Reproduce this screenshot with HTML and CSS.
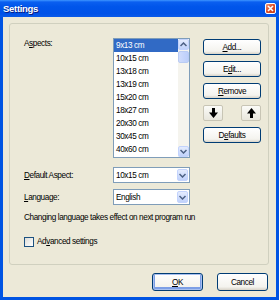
FILE: index.html
```html
<!DOCTYPE html>
<html lang="en">
<head>
    <meta charset="UTF-8">
    <title>Settings</title>
    <link rel="stylesheet" href="styles.css">
</head>
<body>
    <div class="window">
        <div class="titlebar">
            <span class="title">Settings</span>
            <span class="close">
                <svg width="7" height="7" viewBox="0 0 7 7"><path d="M1 1L6 6M6 1L1 6" stroke="#fff" stroke-width="1.6"/></svg>
            </span>
        </div>
        <div class="client">
            <div class="group">
                <div class="row-aspects">
                    <div class="label">A<u>s</u>pects:</div>
                    <div class="listbox">
                        <div class="items">
                            <div class="item selected">9x13 cm</div>
                            <div class="item">10x15 cm</div>
                            <div class="item">13x18 cm</div>
                            <div class="item">13x19 cm</div>
                            <div class="item">15x20 cm</div>
                            <div class="item">18x27 cm</div>
                            <div class="item">20x30 cm</div>
                            <div class="item">30x45 cm</div>
                            <div class="item">40x60 cm</div>
                        </div>
                        <div class="scrollbar">
                            <div class="sb-btn">
                                <svg width="7" height="5" viewBox="0 0 7 5"><path d="M0.5 4L3.5 1L6.5 4" fill="none" stroke="#4d6185" stroke-width="1.5"/></svg>
                            </div>
                            <div class="sb-thumb"></div>
                            <div class="sb-track"></div>
                            <div class="sb-btn">
                                <svg width="7" height="5" viewBox="0 0 7 5"><path d="M0.5 1L3.5 4L6.5 1" fill="none" stroke="#4d6185" stroke-width="1.5"/></svg>
                            </div>
                        </div>
                    </div>
                    <div class="side-buttons">
                        <button class="btn"><u>A</u>dd...</button>
                        <button class="btn">E<u>d</u>it...</button>
                        <button class="btn"><u>R</u>emove</button>
                        <div class="arrows">
                            <button class="arrow-btn">
                                <svg width="9" height="10" viewBox="0 0 9 10"><polygon points="3,0 6,0 6,4.5 9,4.5 4.5,10 0,4.5 3,4.5" fill="#000"/></svg>
                            </button>
                            <button class="arrow-btn">
                                <svg width="9" height="10" viewBox="0 0 9 10"><polygon points="4.5,0 9,5.5 6,5.5 6,10 3,10 3,5.5 0,5.5" fill="#000"/></svg>
                            </button>
                        </div>
                        <button class="btn">D<u>e</u>faults</button>
                    </div>
                </div>

                <div class="row row-default">
                    <div class="label"><u>D</u>efault Aspect:</div>
                    <div class="combo">
                        <span class="combo-text">10x15 cm</span>
                        <span class="combo-btn">
                            <svg width="7" height="5" viewBox="0 0 7 5"><path d="M0.5 1L3.5 4L6.5 1" fill="none" stroke="#4d6185" stroke-width="1.5"/></svg>
                        </span>
                    </div>
                </div>

                <div class="row row-language">
                    <div class="label"><u>L</u>anguage:</div>
                    <div class="combo">
                        <span class="combo-text">English</span>
                        <span class="combo-btn">
                            <svg width="7" height="5" viewBox="0 0 7 5"><path d="M0.5 1L3.5 4L6.5 1" fill="none" stroke="#4d6185" stroke-width="1.5"/></svg>
                        </span>
                    </div>
                </div>

                <div class="note">Changing language takes effect on next program run</div>

                <label class="check-row">
                    <span class="checkbox"></span>
                    <span>Ad<u>v</u>anced settings</span>
                </label>
            </div>

            <div class="footer">
                <button class="btn btn-footer default"><u>O</u>K</button>
                <button class="btn btn-footer">Cancel</button>
            </div>
        </div>
    </div>
</body>
</html>
```

FILE: styles.css
```css
body {
    margin: 0;
    font-family: "Liberation Sans", Arial, sans-serif;
    font-size: 8.2px;
    letter-spacing: -0.4px;
    color: #000;
}
.window {
    width: 279px;
    height: 300px;
    box-sizing: border-box;
    background: #0054e3;
    display: flex;
    flex-direction: column;
}
.titlebar {
    height: 17px;
    display: flex;
    align-items: center;
    justify-content: space-between;
    padding: 0 3px 0 3px;
    background: linear-gradient(#3d95ff 0, #0a5ff0 2px, #0055ea 40%, #0052e8 80%, #0a5ae8 100%);
}
.title {
    color: #fff;
    font-weight: bold;
    font-size: 9.5px;
    letter-spacing: -0.3px;
    text-shadow: 1px 1px 0 #0a1a80;
}
.close {
    width: 11px;
    height: 11px;
    box-sizing: border-box;
    border: 1px solid #fff;
    border-radius: 2px;
    background: linear-gradient(135deg, #f09a7e, #e0512a 45%, #c83a14);
    display: flex;
    align-items: center;
    justify-content: center;
}
.client {
    flex: 1;
    margin: 0 3px 3px 3px;
    background: #ece9d8;
    display: flex;
    flex-direction: column;
}
.group {
    margin: 6px 7px 0 6px;
    height: 242px;
    box-sizing: border-box;
    border: 1px solid #d0d0bf;
    border-radius: 3px;
    padding: 14px 6px 0 14px;
    display: flex;
    flex-direction: column;
}
.label {
    width: 89px;
    line-height: 11px;
}
.row-aspects {
    display: flex;
    align-items: flex-start;
}
.listbox {
    width: 77px;
    height: 120px;
    box-sizing: border-box;
    border: 1px solid #7f9db9;
    background: #fff;
    display: flex;
}
.items {
    flex: 1;
}
.item {
    height: 13px;
    line-height: 13px;
    padding-left: 2px;
}
.item.selected {
    background: #316ac5;
    color: #fff;
}
.scrollbar {
    width: 11px;
    display: flex;
    flex-direction: column;
    background: #f5f4ee;
}
.sb-btn {
    height: 11px;
    box-sizing: border-box;
    border: 1px solid #c3d3fd;
    border-radius: 2px;
    background: linear-gradient(#e4ecfe, #c0d2fb);
    display: flex;
    align-items: center;
    justify-content: center;
}
.sb-thumb {
    height: 12px;
    margin-top: 1px;
    box-sizing: border-box;
    border: 1px solid #b9cbf3;
    border-radius: 2px;
    background: linear-gradient(90deg, #d0dcfc, #bccefa);
}
.sb-track {
    flex: 1;
}
.side-buttons {
    width: 58px;
    margin-left: 13px;
    margin-top: 1px;
    display: flex;
    flex-direction: column;
    gap: 6px;
}
.btn {
    height: 16px;
    padding: 0;
    box-sizing: border-box;
    border: 1px solid #003c74;
    border-radius: 3px;
    background: linear-gradient(#ffffff, #f4f3ee 80%, #d8d3c8);
    font-family: inherit;
    font-size: inherit;
    letter-spacing: inherit;
    color: #000;
}
.arrows {
    display: flex;
    justify-content: space-between;
}
.arrow-btn {
    width: 20px;
    height: 16px;
    padding: 0;
    border: 1px solid #c8c5b5;
    border-radius: 2px;
    background: linear-gradient(#fbfbf8, #e8e6dc);
    display: flex;
    align-items: center;
    justify-content: center;
}
.row {
    display: flex;
    align-items: center;
}
.row-default {
    margin-top: 9px;
}
.row-language {
    margin-top: 6px;
}
.combo {
    width: 77px;
    height: 16px;
    box-sizing: border-box;
    border: 1px solid #7f9db9;
    background: #fff;
    display: flex;
    align-items: center;
    justify-content: space-between;
    padding: 0 1px 0 2px;
}
.combo-btn {
    width: 11px;
    height: 12px;
    box-sizing: border-box;
    border: 1px solid #c3d3fd;
    border-radius: 2px;
    background: linear-gradient(#e4ecfe, #c0d2fb);
    display: flex;
    align-items: center;
    justify-content: center;
}
.note {
    margin-top: 7px;
    line-height: 11px;
}
.check-row {
    margin-top: 13px;
    display: flex;
    align-items: center;
    gap: 3px;
    line-height: 11px;
}
.checkbox {
    width: 10px;
    height: 10px;
    box-sizing: border-box;
    border: 1px solid #1c5180;
    background: linear-gradient(135deg, #dcdcd7, #ffffff);
}
.footer {
    margin-top: 8px;
    padding-right: 8px;
    display: flex;
    justify-content: flex-end;
    gap: 14px;
}
.btn-footer {
    width: 51px;
    height: 18px;
}
.btn-footer.default {
    box-shadow: inset 0 0 0 1px #a8c0f0, inset 0 -1px 0 2px #7d9fe6;
}
```
